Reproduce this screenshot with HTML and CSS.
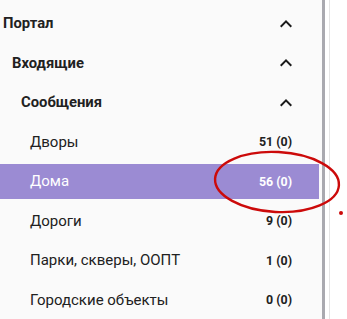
FILE: index.html
```html
<!DOCTYPE html>
<html lang="ru">
<head>
<meta charset="utf-8">
<link rel="stylesheet" href="styles.css">
</head>
<body>
<div class="page">
  <nav class="sidebar">
    <div class="row lvl0 group"><span class="label">Портал</span>
      <svg class="chev" viewBox="0 0 24 24"><path d="M12 8l-6 6 1.41 1.41L12 10.83l4.59 4.58L18 14z"/></svg></div>
    <div class="row lvl1 group"><span class="label">Входящие</span>
      <svg class="chev" viewBox="0 0 24 24"><path d="M12 8l-6 6 1.41 1.41L12 10.83l4.59 4.58L18 14z"/></svg></div>
    <div class="row lvl2 group"><span class="label">Сообщения</span>
      <svg class="chev" viewBox="0 0 24 24"><path d="M12 8l-6 6 1.41 1.41L12 10.83l4.59 4.58L18 14z"/></svg></div>
    <div class="row lvl3"><span class="label">Дворы</span><span class="count">51 (0)</span></div>
    <div class="row lvl3 active"><span class="label">Дома</span><span class="count">56 (0)</span></div>
    <div class="row lvl3"><span class="label">Дороги</span><span class="count">9 (0)</span></div>
    <div class="row lvl3"><span class="label">Парки, скверы, ООПТ</span><span class="count">1 (0)</span></div>
    <div class="row lvl3"><span class="label">Городские объекты</span><span class="count">0 (0)</span></div>
  </nav>
  <div class="scrollbar"></div>
  <div class="rest"></div>
  <svg class="annot" width="347" height="319" viewBox="0 0 347 319">
    <ellipse cx="277" cy="182" rx="62" ry="30" fill="none" stroke="#cc0a0a" stroke-width="2.4" transform="rotate(3 277 182)"/>
    <circle cx="341" cy="213" r="2" fill="#cc0a0a"/>
  </svg>
</div>
</body>
</html>
```
FILE: styles.css
```css
html, body {
  margin: 0;
  padding: 0;
  background: #ffffff;
}
.page {
  position: relative;
  display: flex;
  width: 347px;
  height: 319px;
  overflow: hidden;
  font-family: Roboto, "Noto Sans", sans-serif;
  color: #212121;
}
.sidebar {
  width: 322px;
  flex: none;
  background: #fafafa;
  padding-top: 5.5px;
  display: flex;
  flex-direction: column;
  gap: 4.57px;
  box-sizing: border-box;
}
.row {
  height: 35px;
  flex: none;
  display: flex;
  align-items: center;
  justify-content: space-between;
  width: 319px;
  box-sizing: border-box;
  padding-right: 27px;
}
.group .label {
  font-weight: 700;
  font-size: 14.8px;
}
.lvl0 { padding-left: 3px; padding-right: 21px; }
.lvl1 { padding-left: 12px; padding-right: 21px; }
.lvl2 { padding-left: 21px; padding-right: 21px; }
.lvl3 { padding-left: 30px; }
.lvl3 .label {
  font-size: 15px;
  font-weight: 400;
}
.count {
  font-size: 12.4px;
  font-weight: 700;
}
.active {
  background: #9b8bd3;
  color: #ffffff;
}
.chev {
  width: 24px;
  height: 24px;
  fill: #1a1a1a;
  margin-top: 1px;
}
.scrollbar {
  width: 3px;
  flex: none;
  background: #a9a9af;
}
.rest {
  flex: 1;
  background: #ffffff;
  border-left: 1px solid transparent;
  box-shadow: inset 3px 0 0 #ffffff, inset 4px 0 0 #e4e4e4;
}
.annot {
  position: absolute;
  left: 0;
  top: 0;
  pointer-events: none;
}
```
